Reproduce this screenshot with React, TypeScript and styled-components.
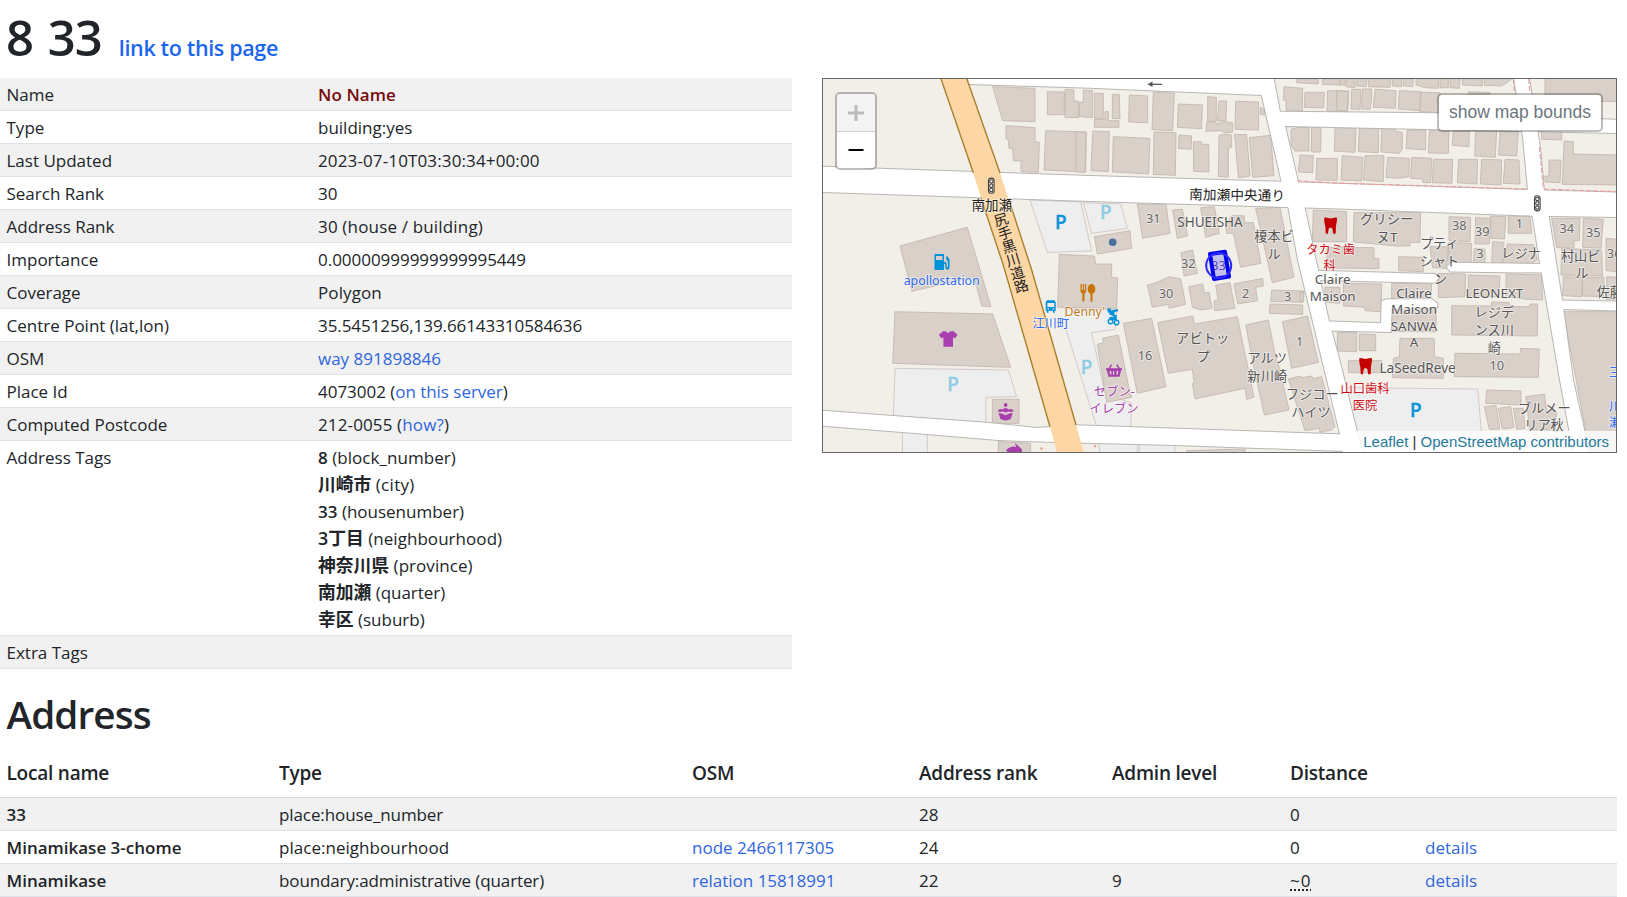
import React from "react";
import styled, { createGlobalStyle } from "styled-components";

const GlobalStyle = createGlobalStyle`
  *, *::before, *::after { box-sizing: border-box; }
  body {
    margin: 0;
    background: #fff;
    color: #212529;
    font-family: "Open Sans", "Noto Sans CJK JP", sans-serif;
    font-size: 17px;
    line-height: 27px;
    overflow: hidden;
  }
`;

const Page = styled.main`
  width: 1617px;
  height: 897px;
  overflow: hidden;
`;

const TitleBar = styled.header`
  display: flex;
  align-items: baseline;
  gap: 17px;
  height: 78px;
  padding: 6px 7px 0 6px;
`;

const Title = styled.h1`
  margin: 0;
  font-size: 49px;
  font-weight: 600;
  line-height: 62px;
  letter-spacing: -1px;
  word-spacing: 3px;
`;

const Link = styled.a`
  color: #2f65dd;
  text-decoration: none;
`;

const PermaLink = styled(Link)`
  color: #1b66ef;
  font-size: 21.5px;
  font-weight: 600;
  letter-spacing: -0.35px;
`;

const Columns = styled.div`
  display: flex;
  justify-content: space-between;
  align-items: flex-start;
`;

const Details = styled.div`
  width: 792px;
`;

const DetailRow = styled.div<{ $striped: boolean }>`
  display: grid;
  grid-template-columns: 311.5px 1fr;
  padding: 3px 6.5px 2px;
  min-height: 33px;
  border-bottom: 1px solid #dee2e6;
  background: ${(p) => (p.$striped ? "#f1f1f1" : "#fff")};
`;

const Text = styled.span<{ $ls?: number; $bold?: boolean; $color?: string }>`
  letter-spacing: ${(p) => p.$ls ?? 0}px;
  font-weight: ${(p) => (p.$bold ? 600 : 400)};
  color: ${(p) => p.$color ?? "inherit"};
  white-space: nowrap;
`;

const TagLine = styled.div`
  height: 27px;
  white-space: nowrap;
`;

const TagValue = styled.span<{ $cjk: boolean }>`
  font-weight: 600;
  font-size: ${(p) => (p.$cjk ? 17.8 : 17)}px;
  line-height: 20px;
`;

const MapFrame = styled.div`
  position: relative;
  width: 795px;
  height: 375px;
  border: 1px solid #666;
  overflow: hidden;
  font-family: "Liberation Sans", Arial, sans-serif;
`;

const MapSvg = styled.svg`
  display: block;
  width: 793px;
  height: 373px;
`;

const ZoomControl = styled.div`
  position: absolute;
  top: 13px;
  left: 12px;
  width: 42px;
  border: 2px solid rgba(0, 0, 0, 0.25);
  border-radius: 5px;
  background-clip: padding-box;
  overflow: hidden;
`;

const ZoomButton = styled.div<{ $disabled?: boolean }>`
  display: flex;
  align-items: center;
  justify-content: center;
  height: 37px;
  background: ${(p) => (p.$disabled ? "#f4f4f4" : "#fff")};
  color: ${(p) => (p.$disabled ? "#bbb" : "#000")};
  & + & { border-top: 1px solid #ccc; }
`;

const BoundsButton = styled.div`
  position: absolute;
  top: 14px;
  right: 13px;
  width: 166px;
  height: 39px;
  border: 2px solid rgba(0, 0, 0, 0.25);
  border-radius: 5px;
  background: #fff;
  background-clip: padding-box;
  color: #6c757d;
  font-size: 17.5px;
  line-height: 34px;
  text-align: center;
  white-space: nowrap;
`;

const Attribution = styled.div`
  position: absolute;
  right: 0;
  bottom: 0;
  height: 21px;
  padding: 0 7px 0 6px;
  background: rgba(255, 255, 255, 0.82);
  color: #333;
  font-size: 15px;
  line-height: 21px;
  white-space: nowrap;
  a { color: #1f7a9c; text-decoration: none; }
`;

const SectionTitle = styled.h2`
  margin: 0;
  padding: 23px 6.5px 0;
  height: 85px;
  font-size: 38.7px;
  font-weight: 600;
  line-height: 44px;
  letter-spacing: -0.9px;
`;

const AddressRow = styled.div<{ $striped?: boolean; $head?: boolean }>`
  display: grid;
  grid-template-columns: 272.5px 413px 227px 193px 178px 135px 1fr;
  height: ${(p) => (p.$head ? 44 : 33)}px;
  padding: ${(p) => (p.$head ? "6px" : "3px")} 0 0 6.5px;
  border-bottom: 1px solid ${(p) => (p.$head ? "#d5dade" : "#dee2e6")};
  background: ${(p) => (p.$striped ? "#f1f1f1" : "#fff")};
  font-size: ${(p) => (p.$head ? 19 : 17)}px;
`;

const Approx = styled.abbr`
  letter-spacing: 1px;
  text-decoration: underline dotted;
  text-decoration-thickness: 2px;
  text-underline-offset: 2px;
`;

type Sheet = { x: number; y: number; shapes: string[] };

/* Survey sheets: outlines in thirds of a pixel from the sheet's corner. */
const buildings: Sheet[] = [
  {
    x: 820, y: 70, shapes: [
      "518,50 645,55 645,155 548,152",
      "682,65 733,66 733,134 682,134",
      "735,58 762,60 762,93 775,93 775,143 735,143",
      "778,97 790,97 790,60 817,62 817,143 778,140",
      "558,167 645,173 645,215 658,217 655,307 603,305 603,273 580,272 578,235 567,235 565,210 558,205",
      "677,182 799,186 797,306 672,300",
      "240,528 442,472 513,710 485,708 462,620 276,664",
    ],
  },
  {
    x: 820, y: 260, shapes: [
      "225,155 518,162 572,322 218,310",
      "517,418 597,418 597,490 517,490",
      "535,545 632,550 632,585 535,585",
    ],
  },
  {
    x: 1080, y: 70, shapes: [
      "43,500 150,482 155,535 52,552",
      "43,70 70,70 70,145 43,145",
      "75,125 85,125 85,152 117,152 117,172 43,172 43,148 75,148",
      "97,73 118,73 120,146 97,146",
      "148,75 203,78 203,158 146,156",
      "220,66 283,70 278,182 216,179",
      "295,102 367,105 365,176 292,172",
      "383,80 409,82 409,155 383,155",
      "417,93 440,93 438,152 413,152",
      "380,155 405,155 410,162 430,155 458,158 458,187 430,187 425,182 378,184",
      "467,94 536,96 536,180 465,178",
      "541,112 553,118 553,135 541,133",
      "-12,185 18,187 15,307 -12,306",
      "38,183 88,185 85,305 33,302",
      "100,200 210,205 206,312 97,306",
      "222,186 288,188 286,316 220,313",
      "297,195 335,198 333,238 295,235",
      "340,215 364,215 366,223 386,223 387,306 341,304",
      "417,196 440,192 455,196 455,232 445,234 445,322 415,320",
      "464,193 500,194 510,318 475,323",
      "508,203 572,196 582,317 518,322",
      "612,50 668,55 667,122 618,122 618,92 610,90",
      "675,67 733,67 731,114 673,112",
      "743,62 806,63 803,125 741,124",
      "650,27 715,27 715,42 650,38",
      "727,27 783,27 783,45 727,43",
      "400,20 533,20 533,31 400,28",
      "633,178 652,172 687,172 687,243 645,243 633,225",
      "695,172 723,172 722,246 694,246",
      "660,255 700,257 698,308 655,306",
      "710,265 772,265 772,331 708,330",
      "172,402 258,404 270,490 188,505",
      "278,420 307,418 323,498 292,505",
      "362,413 403,410 418,490 377,502",
      "437,465 455,437 492,437 495,458 520,458 543,580 482,592 460,490 440,490",
      "527,415 600,412 642,622 577,638",
      "303,548 338,540 352,610 312,618",
    ],
  },
  {
    x: 1340, y: 70, shapes: [
      "0,27 15,27 15,45 0,45", "18,27 45,27 45,53 18,50", "50,27 80,27 78,50 50,48",
      "85,27 152,27 150,52 85,50", "157,27 185,27 185,50 157,48", "190,27 220,27 218,50 190,47",
      "228,27 295,27 295,55 255,53 228,45", "300,27 325,27 325,53 300,53", "330,27 360,27 358,55 330,53",
      "367,27 427,27 427,48 367,45", "433,27 515,27 500,38 485,48 433,46",
      "615,20 835,20 835,95 615,93",
      "-10,62 25,65 22,123 -10,121", "35,58 63,58 60,118 33,117", "67,57 95,57 95,90 90,118 65,117",
      "105,58 168,62 166,115 100,112", "178,62 242,65 240,122 175,117", "242,67 300,68 300,128 240,125",
      "385,65 450,68 450,100 385,100",
      "-15,172 48,175 45,247 -17,243", "58,175 116,176 115,248 55,245",
      "125,175 165,177 168,185 187,187 187,237 178,250 123,246", "202,180 257,180 257,240 198,236",
      "268,182 327,182 325,250 265,249", "340,183 388,183 387,230 337,226",
      "407,180 470,182 466,262 404,258", "480,185 535,187 530,258 476,255",
      "7,257 68,262 65,333 3,330", "75,257 132,257 130,335 70,330", "143,262 208,265 207,320 175,325 138,322",
      "215,262 275,265 272,338 248,337 248,327 212,325", "280,268 338,268 336,340 277,338",
      "356,268 413,268 411,342 352,338", "425,268 485,270 483,345 421,342", "495,268 537,270 540,342 490,340",
      "605,180 665,183 665,210 605,208",
      "672,213 700,215 700,252 835,255 835,345 667,343",
      "627,270 663,270 660,338 615,336 615,318 627,318",
    ],
  },
  {
    x: 1080, y: 260, shapes: [
      "-62,-17 43,-12 47,12 95,12 95,52 113,54 110,145 -67,142",
      "202,75 228,68 268,50 302,57 317,133 268,145 265,133 217,142",
      "327,80 368,72 373,98 388,98 396,145 362,150 337,142",
      "407,75 450,68 465,145 403,152 402,122 415,120",
      "462,72 548,55 550,78 527,82 533,122 473,132",
      "575,90 672,93 668,127 572,124",
      "570,132 668,135 668,163 568,160",
      "607,185 683,168 715,307 635,325",
      "497,195 565,180 587,290 600,330 627,450 553,465 520,315",
      "233,188 338,168 343,192 472,170 522,412 500,418 495,385 345,417 337,370 343,368 337,328 265,340",
      "130,190 215,175 258,380 172,400",
      "52,253 70,248 68,235 115,225 150,400 155,412 80,427",
      "625,357 660,348 665,353 695,348 700,356 725,350 765,500 755,510 720,517 718,505 675,512",
      "320,572 495,567 495,580 320,580",
    ],
  },
  {
    x: 1300, y: 200, shapes: [
      "40,30 140,35 140,125 37,125",
      "162,38 362,38 360,127 330,127 330,138 290,138 160,126",
      "82,142 222,143 222,175 237,175 237,206 80,204",
      "296,170 370,172 370,215 296,212",
      "447,50 512,52 510,125 447,122",
      "527,53 572,55 568,132 525,132",
      "572,48 618,50 613,117 573,115",
      "625,47 690,50 695,100 625,100",
      "390,140 445,140 440,205 398,203",
      "445,128 515,130 513,188 447,190",
      "523,145 555,147 555,188 520,188",
      "578,125 612,127 608,190 575,190",
      "622,132 700,134 712,180 690,192 608,190",
      "755,55 840,55 838,122 822,122 822,145 770,143",
      "850,55 910,58 903,145 848,142",
      "785,145 905,150 908,228 783,225",
      "918,115 955,118 955,215 918,212",
      "790,230 847,232 845,290 788,287",
      "848,232 912,232 910,290 847,288",
      "920,230 955,232 955,300 920,298",
      "790,335 955,335 955,760 870,760",
      "75,262 120,262 120,310 75,306",
      "130,250 245,252 243,335 195,332 195,322 130,318",
      "275,250 395,250 393,298 275,298",
      "272,320 410,305 407,395 270,395",
      "415,220 497,222 495,290 415,293",
      "505,225 600,228 597,290 505,290",
      "618,222 725,225 728,300 680,298 618,290",
      "455,317 575,318 575,306 628,308 628,320 690,320 690,312 713,312 712,408 455,405",
      "112,397 170,397 170,455 112,453",
      "178,402 227,404 227,452 178,452",
      "145,482 245,482 245,518 145,518",
      "300,415 403,415 403,470 430,475 430,535 278,533 280,475 298,470",
      "465,460 660,462 662,445 718,447 715,532 463,530",
      "0,275 12,278 10,305 0,303",
      "560,570 663,573 663,615 557,610",
      "553,620 588,617 600,687 568,688",
      "595,625 632,620 642,683 607,687",
      "640,625 670,625 675,685 650,688",
      "677,590 733,582 740,630 770,635 765,690 690,690",
    ],
  },
];

const parkings: Sheet[] = [
  {
    x: 820, y: 260, shapes: [
      "225,325 565,330 590,410 498,412 498,488 220,468",
      "247,510 322,517 322,585 247,585",
    ],
  },
  { x: 820, y: 70, shapes: ["630,390 782,396 815,543 682,547"] },
  { x: 1080, y: 70, shapes: ["10,398 122,402 142,475 35,490"] },
  {
    x: 1080, y: 260, shapes: [
      "-45,145 110,150 105,208 35,218 75,400 155,430 152,502 50,500 -43,205",
      "55,543 172,548 172,580 60,580", "178,548 285,553 285,580 178,580",
    ],
  },
  { x: 1340, y: 260, shapes: ["20,383 413,387 430,580 60,580"] },
];

const roads = [
  "823,166.7 1090,176 1281.7,181.7 1528,190 1620,192.7 1620,217 1533,215.7 1340,208.5 1090,201 823,192",
  "823,410.7 893,416 987,422.7 1036,428 1076,425.3 1200,429.5 1345,434.5 1345,451 1175,445 1055,442 998,440 927,434 823,425.7",
  "967,75 1273,75 1280,111.7 1438,113.3 1620,120 1620,133 1520,131 1285,126 1300,190 1281.7,182 1261.7,95 1090,87.7 968,84",
  "1287,200 1303,200 1329,321.7 1340,362 1357,432 1364,456 1343,456 1340,434 1298,260",
  "1513.5,75 1528.5,75 1540,147 1544,192 1548,212 1562,300 1573,380 1590,456 1574,456 1560,380 1540,263 1532,212 1528,190 1523,137",
  "1305,270.5 1435,274 1438.3,278 1435,282.7 1313,280",
  "1446.7,266.7 1451,262.7 1543,264 1546,272.6 1450,271.6",
  "1560,300.5 1620,301.7 1620,310.6 1561,309",
  "1324,321.3 1381,323.3 1381.7,301 1386.7,299.3 1431.7,299.3 1437.3,303.3 1437.3,307.3 1391.7,309.3 1390.7,332 1328,330.6",
];

type Label = [string, number, number, string?, number?, string?];

const BLUE = "#2d6cf0";
const RED = "#d0111b";
const PURPLE = "#a93fae";

/* text, x, baseline, colour, size, anchor */
const labels: Label[] = [
  ["南加瀬", 991.7, 210, "#222", 13.5],
  ["apollostation", 941.7, 284.5, BLUE, 12.4],
  ["江川町", 1050.7, 328, BLUE, 12.2],
  ["Denny'", 1064.5, 315.7, "#c27a1c", 12.3, "start"],
  ["31", 1153.3, 222.7], ["32", 1188.3, 268], ["33", 1218.5, 269.5, "#6a4a9c"],
  ["30", 1166, 298.3], ["2", 1245.7, 297.7], ["3", 1287.7, 300.7], ["1", 1299.7, 346], ["16", 1145, 360],
  ["SHUEISHA", 1210, 226.7, "#555", 13.5],
  ["榎本ビ", 1274, 240.7, "#555", 13.2], ["ル", 1274, 259, "#555", 13.2],
  ["タカミ歯", 1330.7, 253.5, RED, 12.2], ["科", 1329.5, 269.5, RED, 12.2],
  ["アビトッ", 1202.7, 343, "#555", 13.3], ["プ", 1203.3, 360.7, "#555", 13.3],
  ["アルツ", 1267.3, 363.3, "#555", 13.3], ["新川崎", 1267.3, 381.3, "#555", 13.3],
  ["フジコー", 1312.3, 398.8, "#555", 13.3], ["ハイツ", 1311, 416.5, "#555", 13.3],
  ["セブン-", 1114.3, 396, PURPLE, 12.3], ["イレブン", 1114, 412.5, PURPLE, 12.3],
  ["山口歯科", 1365, 393, RED, 12.3], ["医院", 1365, 409.5, RED, 12.3],
  ["Claire", 1332.7, 283.8, "#555", 13.4], ["Maison", 1332.7, 300.9, "#555", 13.4],
  ["Claire", 1414, 297.7, "#555", 13.4], ["Maison", 1414, 314, "#555", 13.4],
  ["SANWA", 1414, 330.7, "#555", 13.4], ["A", 1414, 346.7, "#555", 13.4],
  ["グリシー", 1386.7, 224.3, "#555", 13.4], ["ヌT", 1387, 242.3, "#555", 13.4],
  ["38", 1459.3, 230], ["39", 1482.3, 235.7], ["1", 1519.3, 228.3], ["3", 1480, 258.3],
  ["プティ", 1439.3, 248, "#555", 13.2], ["シャト", 1439.5, 266, "#555", 13.2], ["ン", 1440.7, 283.5, "#555", 13.2],
  ["レジナ", 1521, 258.3, "#555", 13.2],
  ["34", 1566.7, 233.3], ["35", 1593.3, 237.3], ["36", 1607, 257.5, "#666", 12.5, "start"],
  ["村山ビ", 1580.7, 260.7, "#555", 13.2], ["ル", 1582, 278.3, "#555", 13.2],
  ["佐藤", 1596.7, 297, "#555", 13.2, "start"],
  ["LEONEXT", 1494.3, 298.3, "#555", 13.4], ["レジデ", 1494.3, 317, "#555", 13.2],
  ["ンス川", 1494.3, 335, "#555", 13.2], ["崎", 1494.3, 353, "#555", 13.2], ["10", 1496.7, 369.8],
  ["LaSeedReve", 1417.6, 372.8, "#555", 13.6],
  ["ブルメー", 1544.3, 412.5, "#555", 13.2], ["リア秋", 1544, 430, "#555", 13.2],
  ["三", 1609, 377, BLUE, 12.5, "start"], ["川", 1609, 410.7, BLUE, 12.5, "start"], ["瀬", 1609, 427, BLUE, 12.5, "start"],
];

const parkingSigns: [number, number, string][] = [
  [1060.7, 229, "#0092da"], [1105.7, 218.5, "#8fcbe4"], [953, 390.7, "#8fcbe4"],
  [1086.5, 374, "#8fcbe4"], [1415.7, 416.7, "#0092da"],
];

const Outlines = ({ sheets, fill, stroke }: { sheets: Sheet[]; fill: string; stroke: string }) => (
  <g fill={fill} stroke={stroke} strokeWidth={2.6}>
    {sheets.map((s) => (
      <g key={`${s.x}-${s.y}`} transform={`translate(${s.x} ${s.y}) scale(0.33333)`}>
        {s.shapes.map((p) => <polygon key={p} points={p} />)}
      </g>
    ))}
  </g>
);

const Signal = ({ x, y }: { x: number; y: number }) => (
  <g transform={`translate(${x} ${y})`} fill="#fff" fillOpacity={0.6} stroke="#444" strokeWidth={1.1}>
    <rect x={-2.8} y={-7.6} width={5.6} height={15.2} rx={2.6} />
    <circle cy={-4.3} r={1.7} /><circle r={1.7} /><circle cy={4.3} r={1.7} />
  </g>
);

const Tooth = ({ x, y }: { x: number; y: number }) => (
  <path
    transform={`translate(${x} ${y})`}
    fill="#c40000"
    d="M0 .2C2-.8 4 .9 6.300.9S10.600-.8 12.600.2C13 4 11.800 6.500 11.600 9c-.2 2.500.2 5-.4 7.300H8.900c-.5-2.400-.2-6.300-2.600-6.300S4.200 13.900 3.700 16.300H1.600C1.100 14 1.300 11.500 1 9 .6 6.500-.4 4 0 .2z"
  />
);

const StreetMap = () => (
  <MapSvg viewBox="823 79 793 373">
    <rect x={823} y={79} width={793} height={373} fill="#f2eee8" />
    <Outlines sheets={parkings} fill="#eeeeee" stroke="#cfc4c1" />
    <Outlines sheets={buildings} fill="#d9d0c9" stroke="#c3b7ae" />
    <g stroke="#b9b7b3" strokeWidth={2} fill="none">{roads.map((p) => <polygon key={p} points={p} />)}</g>
    <g fill="#fff">{roads.map((p) => <polygon key={p} points={p} />)}</g>
    <g fill="none" stroke="#ee9a9a" strokeWidth={1.1} strokeDasharray="5 2">
      <path d="M1297 181L1340 183.300L1528 189M1544 189L1616 191.700M1539.300 147L1543.300 187M1513.500 79L1514.500 93M1528.700 79L1530 93" />
    </g>
    <polygon points="939,73 964.800,73 1000,173 1031.700,270 1076,425 1085,456 1058,456 1050,426.700 1003.300,265 973,172.700" fill="#fcd6a4" />
    <g fill="none" stroke="#a8802f" strokeWidth={1.4}>
      <path d="M939 73L973.300 172.700M981 198L1003.300 265L1050 426.700M964.800 73L1000 173M1009 200L1031.700 270L1076 425" />
    </g>
    <path d="M1162 84.300H1151" stroke="#555" strokeWidth={1.300} />
    <path d="M1147.500 84.300l5-2.800v5.600z" fill="#555" />
    <g fill="#f0a090"><circle cx={1041.500} cy={448.500} r={1.300} /><circle cx={1095} cy={446} r={1.200} /></g>

    <Signal x={991.3} y={185.7} />
    <Signal x={1537.3} y={203.3} />

    <g fill="#0092da">
      <path fillRule="evenodd" d="M934.500 255q0-1 1-1h7.500q1 0 1 1v15h-9.500zM936 256v4h6.500v-4z" />
      <path d="M944 262h1.200q1.500 0 1.500 1.500v3.500q.7 1 1.200 0v-5l-1.700-3 .3-3.500 3 3.500v9q-1.700 3-4 .6l-.3-4.600h-1.200z" />
      <path fillRule="evenodd" d="M1047 300.300h7.500l1.200 2v8.500h-1v2h-1.700v-2h-4.500v2h-1.700v-2h-1.100v-8.500zM1047.300 303v4h7v-4zM1047.500 308.300v1.200h1.500v-1.200zM1052.700 308.300v1.200h1.500v-1.200z" />
      <path d="M1107.500 308.500h3.500v2l7-1.500v2.200l-3.500.7v3l2.800 2h-3l-5-2.600v-1.700h-1.800zM1109 317h6v-2h1.700v5h-6.200z" />
    </g>
    <g fill="none" stroke="#0092da" strokeWidth={1.400}>
      <circle cx={1110.500} cy={321.500} r={2.300} /><circle cx={1116.500} cy={322.500} r={2.300} />
    </g>
    <g fill={PURPLE}>
      <path d="M943 331.300h3q2 3 4.300 0h3.400l3.800 3.500-2.500 3.700-2-1.200v9.500h-9.600v-9.500l-2 1.200-2.500-3.700z" />
      <circle cx={1005.600} cy={405} r={1.900} />
      <path d="M997.500 411.300q2-3.500 5-1.800 3-3 6.300 0 3.300-1.700 5 1.800l-3 .8q-2.500-1.500-5 .6-2.800-2.100-5.200-.6z" />
      <path d="M998.500 413l3.500.6 3.600 1.600 3.600-1.600 3.500-.6-2 6q-5 2.800-10.200 0z" />
      <path d="M1006 450q5-5 10-3l-1-4 4.500 4 2.500 2.500v3h-14z" />
      <path fillRule="evenodd" d="M1106 368.300h2.500l2.500-4 1.200.6-2 3.400h8l-2-3.400 1.200-.6 2.500 4h2.100v1.700h-.8l-1.700 6.800h-11l-1.700-6.800h-.8zM1109.500 371l.7 3.800h1.200v-3.800zM1113 371v3.800h1.200v-3.800zM1116.500 371v3.800h1.200l.7-3.800z" />
    </g>
    <g fill="#c77400">
      <path d="M1080.500 284h1.200v6h1v-6h1.200v6h1v-6h1.300v7q0 2-1.800 2.600v8h-2v-8q-1.900-.6-1.900-2.600z" />
      <ellipse cx={1091.500} cy={289} rx={3.800} ry={5} /><path d="M1090.500 292h2v9.600h-2z" />
    </g>
    <circle cx={1112.7} cy={242.300} r={3.800} fill="#4a6d9f" />

    <g fontFamily='"Noto Sans", "Noto Sans CJK JP", sans-serif' textAnchor="middle" paintOrder="stroke" strokeLinejoin="round">
      {parkingSigns.map(([x, y, color]) => (
        <text key={`${x}`} x={x} y={y} fontSize={19} fontWeight={500} fill={color} stroke={color} strokeWidth={0.4}>P</text>
      ))}
      <g stroke="#fff" strokeOpacity={0.5} strokeWidth={2}>
        {labels.map(([t, x, y, color = "#666", size = 12.8, anchor = "middle"]) => (
          <text key={`${t}${x}${y}`} x={x} y={y} fill={color} fontSize={size} textAnchor={anchor as "middle" | "start"}>{t}</text>
        ))}
        <text transform="translate(1237 200) rotate(1)" fontSize={13.700} fill="#222">南加瀬中央通り</text>
      </g>
      <g transform="translate(1001 220) rotate(-17)" fontSize={14.200} fill="#222">
        {Array.from("尻手黒川道路").map((c, i) => <text key={c} y={5 + i * 13.900}>{c}</text>)}
      </g>
    </g>
    <Tooth x={1324.300} y={217.500} />
    <Tooth x={1359.300} y={358} />
    <polygon points="1210,254 1225,251.800 1229,276.500 1214,279" fill="#00f" fillOpacity={0.15} stroke="#0000f0" strokeWidth={4} strokeLinejoin="round" />
    <circle cx={1218.7} cy={265.500} r={12.500} fill="#00f" fillOpacity={0.05} stroke="#2a2af5" strokeWidth={2} />
  </MapSvg>
);

const addressTags: [string, string, number][] = [
  ["8", "block_number", 0.05], ["川崎市", "city", 0.3], ["33", "housenumber", 0], ["3丁目", "neighbourhood", 0.05],
  ["神奈川県", "province", 0.05], ["南加瀬", "quarter", -0.05], ["幸区", "suburb", 0],
];

const details: [string, React.ReactNode][] = [
  ["Name", <Text $bold $color="#77090d" $ls={0.1}>No Name</Text>],
  ["Type", <Text>building:yes</Text>],
  ["Last Updated", <Text $ls={0.13}>2023-07-10T03:30:34+00:00</Text>],
  ["Search Rank", <Text>30</Text>],
  ["Address Rank", <Text $ls={0.17}>30 (house / building)</Text>],
  ["Importance", <Text $ls={-0.03}>0.00000999999999995449</Text>],
  ["Coverage", <Text $ls={0.1}>Polygon</Text>],
  ["Centre Point (lat,lon)", <Text $ls={-0.07}>35.5451256,139.66143310584636</Text>],
  ["OSM", <Link href="#">way 891898846</Link>],
  ["Place Id", <Text $ls={-0.03}>4073002 (<Link href="#">on this server</Link>)</Text>],
  ["Computed Postcode", <Text $ls={0.13}>212-0055 (<Link href="#">how?</Link>)</Text>],
  ["Address Tags", addressTags.map(([v, k, ls]) => (
    <TagLine key={k}><TagValue $cjk={/[^0-9]/.test(v)}>{v}</TagValue> <Text $ls={ls}>({k})</Text></TagLine>
  ))],
  ["Extra Tags", null],
];

const headings = ["Local name", "Type", "OSM", "Address rank", "Admin level", "Distance", ""];

const addressLines = [
  { name: "33", type: "place:house_number", ls: -0.1, osm: "", rank: "28", admin: "", dist: "0", link: false },
  { name: "Minamikase 3-chome", type: "place:neighbourhood", ls: 0.03, osm: "node 2466117305", rank: "24", admin: "", dist: "0", link: true },
  { name: "Minamikase", type: "boundary:administrative (quarter)", ls: -0.12, osm: "relation 15818991", rank: "22", admin: "9", dist: "~0", link: true },
];

export default function App() {
  return (
    <Page>
      <GlobalStyle />
      <TitleBar>
        <Title>8 33</Title>
        <PermaLink href="#">link to this page</PermaLink>
      </TitleBar>
      <Columns>
        <Details>
          {details.map(([label, value], i) => (
            <DetailRow key={label} $striped={i % 2 === 0}>
              <Text>{label}</Text>
              <div>{value}</div>
            </DetailRow>
          ))}
        </Details>
        <MapFrame>
          <StreetMap />
          <ZoomControl>
            <ZoomButton $disabled>
              <svg width="16" height="16"><path d="M8 0v16M0 8h16" stroke="currentColor" strokeWidth="3" /></svg>
            </ZoomButton>
            <ZoomButton>
              <svg width="16" height="16"><path d="M0.500 8h15" stroke="currentColor" strokeWidth="2" /></svg>
            </ZoomButton>
          </ZoomControl>
          <BoundsButton>show map bounds</BoundsButton>
          <Attribution><a href="#">Leaflet</a> | <a href="#">OpenStreetMap contributors</a></Attribution>
        </MapFrame>
      </Columns>
      <SectionTitle>Address</SectionTitle>
      <AddressRow $head>
        {headings.map((h) => <Text key={h} $bold $ls={-0.22}>{h}</Text>)}
      </AddressRow>
      {addressLines.map((r, i) => (
        <AddressRow key={r.name} $striped={i % 2 === 0}>
          <Text $bold>{r.name}</Text>
          <Text $ls={r.ls}>{r.type}</Text>
          <Text>{r.osm && <Link href="#">{r.osm}</Link>}</Text>
          <Text>{r.rank}</Text>
          <Text>{r.admin}</Text>
          <Text>{r.dist.startsWith("~") ? <Approx>{r.dist}</Approx> : r.dist}</Text>
          <Text>{r.link && <Link href="#">details</Link>}</Text>
        </AddressRow>
      ))}
    </Page>
  );
}
